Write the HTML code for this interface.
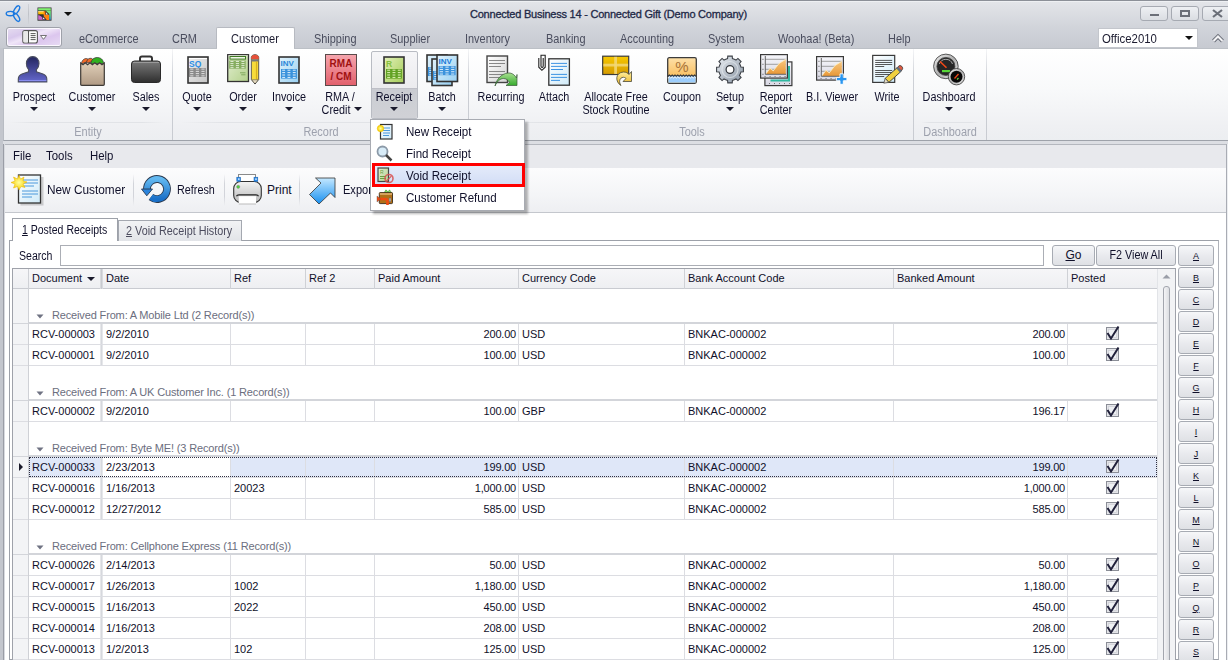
<!DOCTYPE html><html><head><meta charset="utf-8"><style>
*{margin:0;padding:0;box-sizing:border-box}
html,body{width:1228px;height:660px;overflow:hidden}
body{position:relative;background:#fff;font-family:"Liberation Sans",sans-serif;font-size:12px;color:#10102a}
.a{position:absolute}
.t{position:absolute;white-space:nowrap;line-height:14px}
svg{position:absolute;overflow:visible}
.dd{position:absolute;width:0;height:0;border-left:4px solid transparent;border-right:4px solid transparent;border-top:4px solid #1a1a2c}
</style></head><body>
<div class="a" style="left:0px;top:0px;width:1228px;height:48px;background:linear-gradient(#e4e6ea,#dcdee3 12px,#d2d5db 26px,#cbced5 40px,#c7cad1 48px)"></div>
<div class="a" style="left:0px;top:0px;width:1228px;height:1px;background:#8c9098"></div>
<div class="a" style="left:0px;top:1px;width:1228px;height:1px;background:#eef0f3"></div>
<div class="t" style="left:470px;top:5px;font-size:11px;color:#1e2846;letter-spacing:-0.23px;-webkit-text-stroke:0.3px #1e2846;line-height:18px">Connected Business 14 - Connected Gift (Demo Company)</div>
<svg style="left:4px;top:4px" width="20" height="20" viewBox="0 0 20 20"><g fill="none" stroke="#1a78e0" stroke-width="1.4"><ellipse cx="6.3" cy="9.6" rx="4.1" ry="2.2"/><ellipse cx="12.6" cy="5.9" rx="4.6" ry="2.1" transform="rotate(-58 12.6 5.9)"/><ellipse cx="12.6" cy="13.3" rx="4.6" ry="2.1" transform="rotate(58 12.6 13.3)"/></g></svg>
<div class="a" style="left:28px;top:4px;width:1px;height:20px;background:linear-gradient(#d0d3d8,#bfc2c8,#d0d3d8)"></div>
<svg style="left:37px;top:7px" width="15" height="14" viewBox="0 0 15 14"><defs><linearGradient id="gQa" x1="0" y1="0" x2="0" y2="1"><stop offset="0" stop-color="#80f070"/><stop offset="0.6" stop-color="#60d8a0"/><stop offset="1" stop-color="#30a0f0"/></linearGradient></defs><rect x="0.5" y="0.5" width="14" height="13.2" fill="#333"/><rect x="1.2" y="1.2" width="12.6" height="2.2" fill="#80f070"/><path d="M8.6,3.4 L13.8,3.4 L13.8,12.8 L12.3,12.8 L12.3,7 Z" fill="url(#gQa)"/><rect x="1.2" y="4.2" width="5.8" height="3.3" fill="#ffb800"/><rect x="1.2" y="4.2" width="5.8" height="1" fill="#ffe090"/><rect x="1.2" y="8.2" width="7" height="4.6" fill="#c868c8"/><path d="M1.2,7.5 L6,7.5 L11.6,13 L9.4,13 Z" fill="#333"/><path d="M6.5,4.2 L8.2,4.2 L12,8 L12,13 L9.8,13 L6.8,9.6 L6.8,7.5 Z" fill="#ff8010"/><path d="M8.4,4.5 L11.8,7.8 L8.4,7.8 Z" fill="#333"/><path d="M9,5.6 L11,7.4 L9,7.4 Z" fill="#e0f8ff"/><path d="M5.4,9.2 L8.8,12.4 L5.4,12.4 Z" fill="#333"/><path d="M6,10.2 L7.8,11.9 L6,11.9 Z" fill="#e0f8ff"/></svg>
<div class="dd" style="left:64px;top:12px;border-top-color:#111"></div>
<div class="a" style="left:1140px;top:6px;width:28px;height:15px;border:1px solid #a6aab2;border-radius:3px;background:linear-gradient(#eef0f3,#dadde2)"></div>
<div class="a" style="left:1171px;top:6px;width:28px;height:15px;border:1px solid #a6aab2;border-radius:3px;background:linear-gradient(#eef0f3,#dadde2)"></div>
<div class="a" style="left:1202px;top:6px;width:30px;height:15px;border:1px solid #a6aab2;border-radius:3px;background:linear-gradient(#eef0f3,#dadde2)"></div>
<div class="a" style="left:1150px;top:14px;width:9px;height:2px;background:#6b6f78"></div>
<div class="a" style="left:1180px;top:10px;width:10px;height:7px;border:2px solid #6b6f78"></div>
<svg style="left:1212px;top:9px" width="11" height="9" viewBox="0 0 11 9"><path d="M1,1 L10,8 M10,1 L1,8" stroke="#6b6f78" stroke-width="2.2"/></svg>
<div class="t" style="left:79px;top:32px;transform:scaleX(0.91);transform-origin:0 0;font-size:12px;color:#4a4d5e">eCommerce</div>
<div class="t" style="left:172px;top:32px;transform:scaleX(0.91);transform-origin:0 0;font-size:12px;color:#4a4d5e">CRM</div>
<div class="t" style="left:390px;top:32px;transform:scaleX(0.91);transform-origin:0 0;font-size:12px;color:#4a4d5e">Supplier</div>
<div class="t" style="left:465px;top:32px;transform:scaleX(0.91);transform-origin:0 0;font-size:12px;color:#4a4d5e">Inventory</div>
<div class="t" style="left:546px;top:32px;transform:scaleX(0.91);transform-origin:0 0;font-size:12px;color:#4a4d5e">Banking</div>
<div class="t" style="left:620px;top:32px;transform:scaleX(0.91);transform-origin:0 0;font-size:12px;color:#4a4d5e">Accounting</div>
<div class="t" style="left:708px;top:32px;transform:scaleX(0.91);transform-origin:0 0;font-size:12px;color:#4a4d5e">System</div>
<div class="t" style="left:778px;top:32px;transform:scaleX(0.91);transform-origin:0 0;font-size:12px;color:#4a4d5e">Woohaa! (Beta)</div>
<div class="t" style="left:888px;top:32px;transform:scaleX(0.91);transform-origin:0 0;font-size:12px;color:#4a4d5e">Help</div>
<div class="t" style="left:314px;top:32px;transform:scaleX(0.91);transform-origin:0 0;font-size:12px;color:#4a4d5e">Shipping</div>
<div class="a" style="left:6px;top:27px;width:56px;height:20px;border:1px solid #9ea1a9;border-radius:3px;box-shadow:inset 0 0 0 1px #fbf8fe;background:linear-gradient(160deg,#e6def0,#d8c8ec 30%,#f0e6f8 45%,#dcc6ee 65%,#e8dcf4)"></div>
<svg style="left:22px;top:30px" width="27" height="14" viewBox="0 0 27 14"><rect x="0.8" y="0.6" width="14.6" height="12.4" rx="2" fill="#fff" stroke="#555" stroke-width="1.1"/><rect x="1.5" y="1.3" width="4" height="11" fill="#e8e8e8"/><line x1="6.5" y1="1" x2="6.5" y2="13" stroke="#555" stroke-width="1.1"/><path d="M8.6,3.6h5M8.6,5.6h5M8.6,7.6h5M8.6,9.6h5" stroke="#444" stroke-width="0.9"/><path d="M18.5,5.5 L24.5,5.5 L21.5,9.3 Z" fill="#fff" stroke="#666" stroke-width="0.9"/></svg>
<div class="a" style="left:216px;top:27px;width:79px;height:22px;background:#fff;border:1px solid #b7bac1;border-bottom:none;border-radius:2px 2px 0 0"></div>
<div class="t" style="left:231px;top:32px;transform:scaleX(0.92);transform-origin:0 0;font-size:12px;color:#1c1c30">Customer</div>
<div class="a" style="left:1098px;top:28px;width:100px;height:20px;background:#fff;border:1px solid #c3c6cc"></div>
<div class="t" style="left:1102px;top:32px;transform:scaleX(0.95);transform-origin:0 0;font-size:12px;color:#1c1c30">Office2010</div>
<div class="dd" style="left:1185px;top:36px;border-top-color:#111"></div>
<svg style="left:1212px;top:34px" width="12" height="9" viewBox="0 0 12 9"><path d="M1.5,7 L6,2.5 L10.5,7" fill="none" stroke="#6c707a" stroke-width="4"/><path d="M1.5,7 L6,2.5 L10.5,7" fill="none" stroke="#f4f4f6" stroke-width="2"/></svg>
<div class="a" style="left:3px;top:48px;width:1225px;height:93px;background:linear-gradient(#ffffff,#f8f9fa 45%,#eff0f3 85%,#eceef1);border-top:1px solid #bcc0c6;border-left:1px solid #b8bcc3;border-bottom:1px solid #9ea2aa"></div>
<div class="a" style="left:217px;top:48px;width:77px;height:1px;background:#fff"></div>
<div class="a" style="left:172px;top:49px;width:1px;height:91px;background:linear-gradient(#f4f5f7,#cdd0d6 30%,#c8cbd1)"></div>
<div class="a" style="left:468px;top:49px;width:1px;height:91px;background:linear-gradient(#f4f5f7,#cdd0d6 30%,#c8cbd1)"></div>
<div class="a" style="left:913px;top:49px;width:1px;height:91px;background:linear-gradient(#f4f5f7,#cdd0d6 30%,#c8cbd1)"></div>
<div class="a" style="left:986px;top:49px;width:1px;height:91px;background:linear-gradient(#f4f5f7,#cdd0d6 30%,#c8cbd1)"></div>
<div class="a" style="left:10px;top:122px;width:155px;height:1px;background:linear-gradient(90deg,rgba(225,227,231,0),#e1e3e7 15%,#e1e3e7 85%,rgba(225,227,231,0))"></div>
<div class="a" style="left:180px;top:122px;width:280px;height:1px;background:linear-gradient(90deg,rgba(225,227,231,0),#e1e3e7 15%,#e1e3e7 85%,rgba(225,227,231,0))"></div>
<div class="a" style="left:476px;top:122px;width:430px;height:1px;background:linear-gradient(90deg,rgba(225,227,231,0),#e1e3e7 15%,#e1e3e7 85%,rgba(225,227,231,0))"></div>
<div class="a" style="left:921px;top:122px;width:58px;height:1px;background:linear-gradient(90deg,rgba(225,227,231,0),#e1e3e7 15%,#e1e3e7 85%,rgba(225,227,231,0))"></div>
<div class="t" style="left:-12px;top:125px;width:200px;text-align:center;transform:scaleX(0.91);transform-origin:50% 0;font-size:12px;color:#9da1ad">Entity</div>
<div class="t" style="left:221px;top:125px;width:200px;text-align:center;transform:scaleX(0.91);transform-origin:50% 0;font-size:12px;color:#9da1ad">Record</div>
<div class="t" style="left:592px;top:125px;width:200px;text-align:center;transform:scaleX(0.91);transform-origin:50% 0;font-size:12px;color:#9da1ad">Tools</div>
<div class="t" style="left:850px;top:125px;width:200px;text-align:center;transform:scaleX(0.91);transform-origin:50% 0;font-size:12px;color:#9da1ad">Dashboard</div>
<div class="a" style="left:371px;top:51px;width:47px;height:68px;border:1px solid #b9bcc3;border-radius:2px;background:linear-gradient(#f6f6f8,#ececef 50%,#e6e7ea)"></div>
<div class="a" style="left:372px;top:88px;width:45px;height:30px;border-radius:0 0 2px 2px;background:linear-gradient(#b9bac2,#c9cbd1 1.5px,#cdcfd4 40%,#d0d1d6)"></div>
<div class="t" style="left:-66.5px;top:90px;width:200px;text-align:center;transform:scaleX(0.9);transform-origin:50% 0;font-size:12px">Prospect</div>
<div class="dd" style="left:29.5px;top:107px;border-top-color:#1a1a2c"></div>
<div class="t" style="left:-8.5px;top:90px;width:200px;text-align:center;transform:scaleX(0.9);transform-origin:50% 0;font-size:12px">Customer</div>
<div class="dd" style="left:87.5px;top:107px;border-top-color:#1a1a2c"></div>
<div class="t" style="left:45.5px;top:90px;width:200px;text-align:center;transform:scaleX(0.9);transform-origin:50% 0;font-size:12px">Sales</div>
<div class="dd" style="left:141.5px;top:107px;border-top-color:#1a1a2c"></div>
<div class="t" style="left:97px;top:90px;width:200px;text-align:center;transform:scaleX(0.9);transform-origin:50% 0;font-size:12px">Quote</div>
<div class="dd" style="left:193px;top:107px;border-top-color:#1a1a2c"></div>
<div class="t" style="left:142.5px;top:90px;width:200px;text-align:center;transform:scaleX(0.9);transform-origin:50% 0;font-size:12px">Order</div>
<div class="dd" style="left:238.5px;top:107px;border-top-color:#1a1a2c"></div>
<div class="t" style="left:189px;top:90px;width:200px;text-align:center;transform:scaleX(0.9);transform-origin:50% 0;font-size:12px">Invoice</div>
<div class="dd" style="left:285px;top:107px;border-top-color:#1a1a2c"></div>
<div class="t" style="left:294px;top:90px;width:200px;text-align:center;transform:scaleX(0.9);transform-origin:50% 0;font-size:12px">Receipt</div>
<div class="dd" style="left:390px;top:107px;border-top-color:#1a1a2c"></div>
<div class="t" style="left:342px;top:90px;width:200px;text-align:center;transform:scaleX(0.9);transform-origin:50% 0;font-size:12px">Batch</div>
<div class="dd" style="left:438px;top:107px;border-top-color:#1a1a2c"></div>
<div class="t" style="left:401px;top:90px;width:200px;text-align:center;transform:scaleX(0.9);transform-origin:50% 0;font-size:12px">Recurring</div>
<div class="t" style="left:454px;top:90px;width:200px;text-align:center;transform:scaleX(0.9);transform-origin:50% 0;font-size:12px">Attach</div>
<div class="t" style="left:582px;top:90px;width:200px;text-align:center;transform:scaleX(0.9);transform-origin:50% 0;font-size:12px">Coupon</div>
<div class="t" style="left:630px;top:90px;width:200px;text-align:center;transform:scaleX(0.9);transform-origin:50% 0;font-size:12px">Setup</div>
<div class="dd" style="left:726px;top:107px;border-top-color:#1a1a2c"></div>
<div class="t" style="left:732px;top:90px;width:200px;text-align:center;transform:scaleX(0.9);transform-origin:50% 0;font-size:12px">B.I. Viewer</div>
<div class="t" style="left:787px;top:90px;width:200px;text-align:center;transform:scaleX(0.9);transform-origin:50% 0;font-size:12px">Write</div>
<div class="t" style="left:849px;top:90px;width:200px;text-align:center;transform:scaleX(0.9);transform-origin:50% 0;font-size:12px">Dashboard</div>
<div class="dd" style="left:945px;top:107px;border-top-color:#1a1a2c"></div>
<div class="t" style="left:240px;top:90px;width:200px;text-align:center;transform:scaleX(0.9);transform-origin:50% 0;font-size:12px">RMA /</div>
<div class="t" style="left:236px;top:103px;width:200px;text-align:center;transform:scaleX(0.9);transform-origin:50% 0;font-size:12px">Credit</div>
<div class="dd" style="left:354px;top:107px;border-top-color:#1a1a2c"></div>
<div class="t" style="left:516px;top:90px;width:200px;text-align:center;transform:scaleX(0.9);transform-origin:50% 0;font-size:12px">Allocate Free</div>
<div class="t" style="left:516px;top:103px;width:200px;text-align:center;transform:scaleX(0.9);transform-origin:50% 0;font-size:12px">Stock Routine</div>
<div class="t" style="left:676px;top:90px;width:200px;text-align:center;transform:scaleX(0.9);transform-origin:50% 0;font-size:12px">Report</div>
<div class="t" style="left:676px;top:103px;width:200px;text-align:center;transform:scaleX(0.9);transform-origin:50% 0;font-size:12px">Center</div>
<svg width="0" height="0" style="position:absolute"><defs>
<linearGradient id="gPerson" x1="0" y1="0" x2="0" y2="1"><stop offset="0" stop-color="#23265e"/><stop offset="1" stop-color="#6468cc"/></linearGradient>
<linearGradient id="gBag" x1="0" y1="0" x2="0" y2="1"><stop offset="0" stop-color="#e0cfb8"/><stop offset="1" stop-color="#b09a84"/></linearGradient>
<linearGradient id="gCase" x1="0" y1="0" x2="0" y2="1"><stop offset="0" stop-color="#7a7a7a"/><stop offset="1" stop-color="#2e2e2e"/></linearGradient>
<linearGradient id="gGray" x1="0" y1="0" x2="1" y2="1"><stop offset="0" stop-color="#f0f0f0"/><stop offset="1" stop-color="#c4c4c4"/></linearGradient>
<linearGradient id="gGreen" x1="0" y1="0" x2="1" y2="1"><stop offset="0" stop-color="#e4efd2"/><stop offset="1" stop-color="#b2d08a"/></linearGradient>
<linearGradient id="gLime" x1="0" y1="0" x2="1" y2="1"><stop offset="0" stop-color="#e2f0b8"/><stop offset="1" stop-color="#a4cc58"/></linearGradient>
<linearGradient id="gBlue" x1="0" y1="0" x2="1" y2="1"><stop offset="0" stop-color="#e2f3fc"/><stop offset="1" stop-color="#98d0f2"/></linearGradient>
<linearGradient id="gRed" x1="0" y1="0" x2="0" y2="1"><stop offset="0" stop-color="#f6a6ae"/><stop offset="1" stop-color="#e2606c"/></linearGradient>
<linearGradient id="gGold" x1="0" y1="0" x2="0" y2="1"><stop offset="0" stop-color="#f7c800"/><stop offset="1" stop-color="#d49a00"/></linearGradient>
<linearGradient id="gOrange" x1="0" y1="0" x2="0" y2="1"><stop offset="0" stop-color="#fde0a8"/><stop offset="1" stop-color="#f8b448"/></linearGradient>
<linearGradient id="gGear" x1="0" y1="0" x2="1" y2="1"><stop offset="0" stop-color="#eef2f6"/><stop offset="0.5" stop-color="#b8c0ca"/><stop offset="1" stop-color="#8a96a4"/></linearGradient>
<linearGradient id="gChart" x1="0" y1="0" x2="0" y2="1"><stop offset="0" stop-color="#f6f6fa"/><stop offset="1" stop-color="#d8d8e4"/></linearGradient>
<linearGradient id="gArea" x1="0" y1="0" x2="0" y2="1"><stop offset="0" stop-color="#f8c880"/><stop offset="1" stop-color="#e89838"/></linearGradient>
<linearGradient id="gArrowG" x1="0" y1="0" x2="0" y2="1"><stop offset="0" stop-color="#a8e090"/><stop offset="1" stop-color="#30a828"/></linearGradient>
<linearGradient id="gBlueArr" x1="0" y1="0" x2="0" y2="1"><stop offset="0" stop-color="#c4e8ff"/><stop offset="1" stop-color="#1890f0"/></linearGradient>
<linearGradient id="gRefresh" x1="0" y1="0" x2="0" y2="1"><stop offset="0" stop-color="#62b8f0"/><stop offset="1" stop-color="#1a70c8"/></linearGradient>
<linearGradient id="gPrinter" x1="0" y1="0" x2="0" y2="1"><stop offset="0" stop-color="#f4f4f4"/><stop offset="1" stop-color="#b8b8b8"/></linearGradient>
<linearGradient id="gPaper" x1="0" y1="0" x2="1" y2="1"><stop offset="0" stop-color="#ffffff"/><stop offset="1" stop-color="#d4d4d4"/></linearGradient>
<linearGradient id="gPaperB" x1="0" y1="0" x2="1" y2="1"><stop offset="0" stop-color="#ffffff"/><stop offset="1" stop-color="#cfeaf8"/></linearGradient>
<linearGradient id="gRing" x1="0" y1="0" x2="1" y2="1"><stop offset="0" stop-color="#f0f0f0"/><stop offset="0.5" stop-color="#b0b0b0"/><stop offset="1" stop-color="#e8e8e8"/></linearGradient>
<linearGradient id="gArrowY" x1="0" y1="0" x2="0" y2="1"><stop offset="0" stop-color="#fff0a0"/><stop offset="1" stop-color="#e8b020"/></linearGradient>
<radialGradient id="gSun" cx="0.5" cy="0.5" r="0.5"><stop offset="0" stop-color="#ffffa0"/><stop offset="1" stop-color="#f8d000"/></radialGradient>
</defs></svg>
<svg style="left:18px;top:56px" width="30" height="27" viewBox="0 0 30 27"><path d="M14.7,0.6 C18.5,0.6 21,3.5 21,7.5 C21,10.5 19.8,12.3 18.4,13.5 L18.4,15.8 L25,18 C27.5,19 28.8,20.5 28.8,23 L28.8,25.9 L0.3,25.9 L0.3,23 C0.3,20.5 1.5,19 4,18 L10.6,15.8 L10.6,13.5 C9.2,12.3 8.4,10.5 8.4,7.5 C8.4,3.5 11,0.6 14.7,0.6 Z" fill="url(#gPerson)" stroke="#4a4e60" stroke-width="1.1"/><rect x="1" y="24" width="27.3" height="1.1" fill="#8a8ef0"/></svg>
<svg style="left:80px;top:55px" width="25" height="31" viewBox="0 0 25 31"><path d="M1.5,9 C1.5,3.5 8,1.5 9,6 Z" fill="#f06a28" stroke="#333" stroke-width="0.7"/><path d="M6.5,8 C6.5,2.5 13,1.5 14,6.5 Z" fill="#ee6a2a" stroke="#333" stroke-width="0.7"/><path d="M11,8.5 C11,0.5 23.5,0.5 23.5,8.5 Z" fill="#30b020" stroke="#333" stroke-width="0.7"/><path d="M0.7,8 L3,9.8 L5.2,7.8 L7.6,9.8 L10,7.8 L12.4,9.8 L14.8,7.8 L17.2,9.8 L19.6,7.8 L22,9.8 L24.3,8 L24.3,29.3 Q24.3,30.3 23.3,30.3 L1.7,30.3 Q0.7,30.3 0.7,29.3 Z" fill="url(#gBag)" stroke="#3e3a36" stroke-width="1.2"/></svg>
<svg style="left:131px;top:56px" width="30" height="27" viewBox="0 0 30 27"><rect x="9" y="0.5" width="12" height="6" rx="2" fill="none" stroke="#333" stroke-width="2"/><rect x="0.5" y="5" width="29" height="21.5" rx="3" fill="url(#gCase)" stroke="#2a2a2a"/><rect x="2" y="6" width="26" height="1" fill="#9a9a9a"/></svg>
<svg style="left:187px;top:56px" width="22" height="28" viewBox="0 0 22 28"><rect x="1" y="1" width="20" height="26" fill="url(#gGray)" stroke="#333" stroke-width="1.6"/><rect x="2" y="2" width="18" height="1" fill="#fff"/><text x="2" y="10.5" font-family="Liberation Sans" font-weight="bold" font-size="8.5" fill="#2a8ee6">SQ</text><rect x="2" y="12" width="16.799999999999997" height="9.0" fill="#8a8a8a"/><line x1="3.2" y1="13.12" x2="6.3999999999999995" y2="13.12" stroke="#e4e4e4" stroke-width="0.94"/><line x1="8.799999999999999" y1="13.12" x2="12.0" y2="13.12" stroke="#e4e4e4" stroke-width="0.94"/><line x1="14.399999999999999" y1="13.12" x2="17.599999999999998" y2="13.12" stroke="#e4e4e4" stroke-width="0.94"/><line x1="3.2" y1="15.38" x2="6.3999999999999995" y2="15.38" stroke="#e4e4e4" stroke-width="0.94"/><line x1="8.799999999999999" y1="15.38" x2="12.0" y2="15.38" stroke="#e4e4e4" stroke-width="0.94"/><line x1="14.399999999999999" y1="15.38" x2="17.599999999999998" y2="15.38" stroke="#e4e4e4" stroke-width="0.94"/><line x1="3.2" y1="17.62" x2="6.3999999999999995" y2="17.62" stroke="#e4e4e4" stroke-width="0.94"/><line x1="8.799999999999999" y1="17.62" x2="12.0" y2="17.62" stroke="#e4e4e4" stroke-width="0.94"/><line x1="14.399999999999999" y1="17.62" x2="17.599999999999998" y2="17.62" stroke="#e4e4e4" stroke-width="0.94"/><line x1="3.2" y1="19.88" x2="6.3999999999999995" y2="19.88" stroke="#e4e4e4" stroke-width="0.94"/><line x1="8.799999999999999" y1="19.88" x2="12.0" y2="19.88" stroke="#e4e4e4" stroke-width="0.94"/><line x1="14.399999999999999" y1="19.88" x2="17.599999999999998" y2="19.88" stroke="#e4e4e4" stroke-width="0.94"/></svg>
<svg style="left:227px;top:54px" width="33" height="31" viewBox="0 0 33 31"><rect x="0.7" y="0.7" width="20.8" height="26.8" fill="url(#gGreen)" stroke="#333" stroke-width="1.3"/><rect x="1.4" y="1.4" width="19.4" height="0.8" fill="#fff" opacity="0.8"/><rect x="3" y="2.5" width="15.5" height="2.6" fill="#f0f6e8" stroke="#3e7a22" stroke-width="1"/><rect x="2.2" y="6.5" width="16.5" height="8.2" fill="#86ad60"/><line x1="3.4000000000000004" y1="7.53" x2="6.5" y2="7.53" stroke="#eef5e4" stroke-width="0.86"/><line x1="8.9" y1="7.53" x2="12.0" y2="7.53" stroke="#eef5e4" stroke-width="0.86"/><line x1="14.399999999999999" y1="7.53" x2="17.5" y2="7.53" stroke="#eef5e4" stroke-width="0.86"/><line x1="3.4000000000000004" y1="9.58" x2="6.5" y2="9.58" stroke="#eef5e4" stroke-width="0.86"/><line x1="8.9" y1="9.58" x2="12.0" y2="9.58" stroke="#eef5e4" stroke-width="0.86"/><line x1="14.399999999999999" y1="9.58" x2="17.5" y2="9.58" stroke="#eef5e4" stroke-width="0.86"/><line x1="3.4000000000000004" y1="11.62" x2="6.5" y2="11.62" stroke="#eef5e4" stroke-width="0.86"/><line x1="8.9" y1="11.62" x2="12.0" y2="11.62" stroke="#eef5e4" stroke-width="0.86"/><line x1="14.399999999999999" y1="11.62" x2="17.5" y2="11.62" stroke="#eef5e4" stroke-width="0.86"/><line x1="3.4000000000000004" y1="13.67" x2="6.5" y2="13.67" stroke="#eef5e4" stroke-width="0.86"/><line x1="8.9" y1="13.67" x2="12.0" y2="13.67" stroke="#eef5e4" stroke-width="0.86"/><line x1="14.399999999999999" y1="13.67" x2="17.5" y2="13.67" stroke="#eef5e4" stroke-width="0.86"/><path d="M13,18.8h5.5M14.2,20.8h4.3" stroke="#7aa456" stroke-width="0.9"/><path d="M24.3,3.5 C24.3,-0.3 31.7,-0.3 31.7,3.5 L31.7,25.5 L28,30 L24.3,25.5 Z" fill="#f6dc3a" stroke="#4a4a4a" stroke-width="0.9"/><path d="M24.3,3.5 C24.3,-0.3 31.7,-0.3 31.7,3.5 L31.7,5.2 L24.3,5.2 Z" fill="#e6503a"/><rect x="24.3" y="5.2" width="7.4" height="2.3" fill="#777"/><path d="M29.5,7.5 L29.5,25 L31.2,25.5" stroke="#d8b020" stroke-width="1.2" fill="none"/><path d="M24.8,25.8 L31.2,25.8 L28,30 Z" fill="#e8dcc0" stroke="#555" stroke-width="0.6"/><path d="M27.2,29 L28,30.2 L28.8,29 Z" fill="#222"/></svg>
<svg style="left:278px;top:56px" width="22" height="28" viewBox="0 0 22 28"><rect x="1" y="1" width="20" height="26" fill="url(#gBlue)" stroke="#333" stroke-width="1.6"/><text x="2.5" y="9.5" font-family="Liberation Sans" font-weight="bold" font-size="8" fill="#2a86d8">INV</text><rect x="3" y="13" width="15.899999999999999" height="9.6" fill="#3a92dc"/><line x1="4.2" y1="14.20" x2="7.1000000000000005" y2="14.20" stroke="#dff0fb" stroke-width="1.01"/><line x1="9.5" y1="14.20" x2="12.4" y2="14.20" stroke="#dff0fb" stroke-width="1.01"/><line x1="14.799999999999999" y1="14.20" x2="17.7" y2="14.20" stroke="#dff0fb" stroke-width="1.01"/><line x1="4.2" y1="16.60" x2="7.1000000000000005" y2="16.60" stroke="#dff0fb" stroke-width="1.01"/><line x1="9.5" y1="16.60" x2="12.4" y2="16.60" stroke="#dff0fb" stroke-width="1.01"/><line x1="14.799999999999999" y1="16.60" x2="17.7" y2="16.60" stroke="#dff0fb" stroke-width="1.01"/><line x1="4.2" y1="19.00" x2="7.1000000000000005" y2="19.00" stroke="#dff0fb" stroke-width="1.01"/><line x1="9.5" y1="19.00" x2="12.4" y2="19.00" stroke="#dff0fb" stroke-width="1.01"/><line x1="14.799999999999999" y1="19.00" x2="17.7" y2="19.00" stroke="#dff0fb" stroke-width="1.01"/><line x1="4.2" y1="21.40" x2="7.1000000000000005" y2="21.40" stroke="#dff0fb" stroke-width="1.01"/><line x1="9.5" y1="21.40" x2="12.4" y2="21.40" stroke="#dff0fb" stroke-width="1.01"/><line x1="14.799999999999999" y1="21.40" x2="17.7" y2="21.40" stroke="#dff0fb" stroke-width="1.01"/></svg>
<svg style="left:325px;top:54px" width="32" height="32" viewBox="0 0 32 32"><rect x="0.5" y="0.5" width="31" height="31" fill="url(#gRed)" stroke="#5a4a4a"/><text x="16" y="13" text-anchor="middle" font-family="Liberation Sans" font-weight="bold" font-size="10" fill="#a01010">RMA</text><text x="16" y="26" text-anchor="middle" font-family="Liberation Sans" font-weight="bold" font-size="10" fill="#a01010">/ CM</text></svg>
<svg style="left:383px;top:56px" width="22" height="28" viewBox="0 0 22 28"><rect x="1" y="1" width="20" height="26" fill="url(#gLime)" stroke="#333" stroke-width="1.6"/><text x="3" y="10.5" font-family="Liberation Sans" font-weight="bold" font-size="8.5" fill="#86c040">R</text><rect x="3" y="13" width="15.899999999999999" height="9.6" fill="#62a224"/><line x1="4.2" y1="14.20" x2="7.1000000000000005" y2="14.20" stroke="#e0f0b8" stroke-width="1.01"/><line x1="9.5" y1="14.20" x2="12.4" y2="14.20" stroke="#e0f0b8" stroke-width="1.01"/><line x1="14.799999999999999" y1="14.20" x2="17.7" y2="14.20" stroke="#e0f0b8" stroke-width="1.01"/><line x1="4.2" y1="16.60" x2="7.1000000000000005" y2="16.60" stroke="#e0f0b8" stroke-width="1.01"/><line x1="9.5" y1="16.60" x2="12.4" y2="16.60" stroke="#e0f0b8" stroke-width="1.01"/><line x1="14.799999999999999" y1="16.60" x2="17.7" y2="16.60" stroke="#e0f0b8" stroke-width="1.01"/><line x1="4.2" y1="19.00" x2="7.1000000000000005" y2="19.00" stroke="#e0f0b8" stroke-width="1.01"/><line x1="9.5" y1="19.00" x2="12.4" y2="19.00" stroke="#e0f0b8" stroke-width="1.01"/><line x1="14.799999999999999" y1="19.00" x2="17.7" y2="19.00" stroke="#e0f0b8" stroke-width="1.01"/><line x1="4.2" y1="21.40" x2="7.1000000000000005" y2="21.40" stroke="#e0f0b8" stroke-width="1.01"/><line x1="9.5" y1="21.40" x2="12.4" y2="21.40" stroke="#e0f0b8" stroke-width="1.01"/><line x1="14.799999999999999" y1="21.40" x2="17.7" y2="21.40" stroke="#e0f0b8" stroke-width="1.01"/></svg>
<svg style="left:426px;top:54px" width="33" height="33" viewBox="0 0 33 33"><rect x="1" y="1" width="20" height="26.5" fill="url(#gBlue)" stroke="#333" stroke-width="1.6"/><rect x="2" y="13" width="5.5" height="9.0" fill="#3a92dc"/><line x1="3.2" y1="14.12" x2="6.3" y2="14.12" stroke="#dff0fb" stroke-width="0.94"/><line x1="3.2" y1="16.38" x2="6.3" y2="16.38" stroke="#dff0fb" stroke-width="0.94"/><line x1="3.2" y1="18.62" x2="6.3" y2="18.62" stroke="#dff0fb" stroke-width="0.94"/><line x1="3.2" y1="20.88" x2="6.3" y2="20.88" stroke="#dff0fb" stroke-width="0.94"/><rect x="6" y="5" width="20" height="26.5" fill="url(#gBlue)" stroke="#333" stroke-width="1.6"/><rect x="7" y="17" width="5.5" height="9.0" fill="#3a92dc"/><line x1="8.2" y1="18.12" x2="11.3" y2="18.12" stroke="#dff0fb" stroke-width="0.94"/><line x1="8.2" y1="20.38" x2="11.3" y2="20.38" stroke="#dff0fb" stroke-width="0.94"/><line x1="8.2" y1="22.62" x2="11.3" y2="22.62" stroke="#dff0fb" stroke-width="0.94"/><line x1="8.2" y1="24.88" x2="11.3" y2="24.88" stroke="#dff0fb" stroke-width="0.94"/><rect x="11" y="1" width="20.5" height="26.5" fill="url(#gBlue)" stroke="#333" stroke-width="1.6"/><text x="12.5" y="9.5" font-family="Liberation Sans" font-weight="bold" font-size="8" fill="#1a7ad8">INV</text><rect x="12.5" y="12" width="17.1" height="9.2" fill="#3a92dc"/><line x1="13.7" y1="13.15" x2="17.0" y2="13.15" stroke="#dff0fb" stroke-width="0.97"/><line x1="19.4" y1="13.15" x2="22.7" y2="13.15" stroke="#dff0fb" stroke-width="0.97"/><line x1="25.099999999999998" y1="13.15" x2="28.400000000000002" y2="13.15" stroke="#dff0fb" stroke-width="0.97"/><line x1="13.7" y1="15.45" x2="17.0" y2="15.45" stroke="#dff0fb" stroke-width="0.97"/><line x1="19.4" y1="15.45" x2="22.7" y2="15.45" stroke="#dff0fb" stroke-width="0.97"/><line x1="25.099999999999998" y1="15.45" x2="28.400000000000002" y2="15.45" stroke="#dff0fb" stroke-width="0.97"/><line x1="13.7" y1="17.75" x2="17.0" y2="17.75" stroke="#dff0fb" stroke-width="0.97"/><line x1="19.4" y1="17.75" x2="22.7" y2="17.75" stroke="#dff0fb" stroke-width="0.97"/><line x1="25.099999999999998" y1="17.75" x2="28.400000000000002" y2="17.75" stroke="#dff0fb" stroke-width="0.97"/><line x1="13.7" y1="20.05" x2="17.0" y2="20.05" stroke="#dff0fb" stroke-width="0.97"/><line x1="19.4" y1="20.05" x2="22.7" y2="20.05" stroke="#dff0fb" stroke-width="0.97"/><line x1="25.099999999999998" y1="20.05" x2="28.400000000000002" y2="20.05" stroke="#dff0fb" stroke-width="0.97"/></svg>
<svg style="left:486px;top:55px" width="32" height="32" viewBox="0 0 32 32"><rect x="1" y="1" width="20.5" height="26.5" fill="url(#gPaper)" stroke="#444" stroke-width="1.4"/><path d="M3,5.5h16M3,8.5h16M3,11.5h12M3,16.5h16M3,19.5h16M3,22.5h16" stroke="#7a7a7a" stroke-width="0.9"/><path d="M9,31 C11,22 18,17.5 24,18 C27,18.5 29,20.5 30.5,23 L31,19.5 L31,30.5 L20,30.5 L23.5,27.5 C22,25 20,23.5 17.5,23.5 C14,23.5 11,26.5 9,31 Z" fill="url(#gArrowG)" stroke="#3a5a3a" stroke-width="0.7"/></svg>
<svg style="left:538px;top:54px" width="33" height="33" viewBox="0 0 33 33"><rect x="10.8" y="4.8" width="20.6" height="26.4" fill="url(#gPaperB)" stroke="#333" stroke-width="1.3"/><path d="M13,9.4h16M13,12.4h16M13,15.5h12M13,20.4h16M13,23.4h16M13,26.4h9" stroke="#2a88e0" stroke-width="0.9"/><path d="M0.8,4 L0.8,13.2 L3.9,16.3 L7.2,13.2 L7.2,1.2 L3,1.2 L3,12 Q3,13.4 4.1,13.4 Q5.2,13.4 5.2,12 L5.2,4" fill="none" stroke="#222" stroke-width="1.1"/></svg>
<svg style="left:602px;top:55px" width="31" height="31" viewBox="0 0 31 31"><rect x="0.7" y="1.2" width="26" height="18.3" fill="url(#gGold)" stroke="#3a3a3a" stroke-width="1.2"/><rect x="12.2" y="1.8" width="2.8" height="17.2" fill="#f2d878" opacity="0.85"/><rect x="1.3" y="8.7" width="24.8" height="2.8" fill="#f2d878" opacity="0.85"/><path d="M19,30.5 C13,27 13,17.5 21.5,17 C24,17 26,18 27,19.5 L29.5,16.5 L29.5,26.5 L21,26.5 L24,23.5 C23,22.5 22,22.3 21.3,22.3 C17.5,22.5 16.5,27 19,30.5 Z" fill="url(#gArrowY)" stroke="#4a4a3a" stroke-width="0.8"/></svg>
<svg style="left:667px;top:57px" width="30" height="27" viewBox="0 0 30 27"><rect x="0.7" y="0.7" width="28.6" height="25.6" rx="1.5" fill="url(#gOrange)" stroke="#3c3c3c" stroke-width="1.3"/><rect x="1.3" y="18.5" width="27.4" height="7.2" fill="#9ccdfc"/><path d="M1.3,18 L1.0,19.3 L2.4,18.0 L3.8,19.3 L5.2,18.0 L6.6,19.3 L8.0,18.0 L9.4,19.3 L10.8,18.0 L12.2,19.3 L13.6,18.0 L15.0,19.3 L16.4,18.0 L17.8,19.3 L19.2,18.0 L20.6,19.3 L22.0,18.0 L23.4,19.3 L24.8,18.0 L26.2,19.3 L27.6,18.0 L29.0,19.3 " fill="none" stroke="#3a3a3a" stroke-width="1.2"/><path d="M1.3,20.3 L1.0,21.2 L2.4,19.9 L3.8,21.2 L5.2,19.9 L6.6,21.2 L8.0,19.9 L9.4,21.2 L10.8,19.9 L12.2,21.2 L13.6,19.9 L15.0,21.2 L16.4,19.9 L17.8,21.2 L19.2,19.9 L20.6,21.2 L22.0,19.9 L23.4,21.2 L24.8,19.9 L26.2,21.2 L27.6,19.9 L29.0,21.2 " fill="none" stroke="#f4f4f4" stroke-width="0.9"/><text x="15" y="15.3" text-anchor="middle" font-family="Liberation Sans" font-size="15" fill="#a8743a">%</text></svg>
<svg style="left:716px;top:56px" width="28" height="28" viewBox="0 0 28 28"><polygon points="9.73,3.15 11.58,2.57 11.76,0.09 16.24,0.09 16.42,2.57 18.30,3.16 20.02,4.05 21.90,2.43 25.07,5.60 23.45,7.48 24.35,9.23 24.93,11.08 27.41,11.26 27.41,15.74 24.93,15.92 24.34,17.80 23.45,19.52 25.07,21.40 21.90,24.57 20.02,22.95 18.27,23.85 16.42,24.43 16.24,26.91 11.76,26.91 11.58,24.43 9.70,23.84 7.98,22.95 6.10,24.57 2.93,21.40 4.55,19.52 3.65,17.77 3.07,15.92 0.59,15.74 0.59,11.26 3.07,11.08 3.66,9.20 4.55,7.48 2.93,5.60 6.10,2.43 7.98,4.05" fill="url(#gGear)" stroke="#3e4248" stroke-width="1.1"/><circle cx="14" cy="13.5" r="8" fill="none" stroke="#e8ecf0" stroke-width="1.2" opacity="0.6"/><circle cx="14" cy="13.5" r="3.9" fill="#fff" stroke="#2e3238" stroke-width="1.2"/></svg>
<svg style="left:760px;top:54px" width="33" height="33" viewBox="0 0 33 33"><rect x="4.9" y="7.9" width="27" height="23.7" fill="url(#gChart)" stroke="#3a3a3a" stroke-width="1.2"/><path d="M10.5,26.5 L29,26.5 L29,12" fill="none" stroke="#30b8a0" stroke-width="2"/><rect x="9" y="29" width="0.9" height="0.9" fill="#555"/><rect x="14" y="29" width="0.9" height="0.9" fill="#555"/><rect x="19" y="29" width="0.9" height="0.9" fill="#555"/><rect x="24" y="29" width="0.9" height="0.9" fill="#555"/><rect x="29" y="29" width="0.9" height="0.9" fill="#555"/><rect x="0.6" y="0.6" width="26.8" height="23.5" fill="url(#gChart)" stroke="#3a3a3a" stroke-width="1.2"/><path d="M5.3,5.3h20.5M5.3,10.3h20.5M5.3,15.3h20.5" stroke="#8a8a8a" stroke-width="0.8"/><path d="M2.3,5.3h1.3M2.3,10.3h1.3M2.3,15.3h1.3M2.3,20.3h1.3" stroke="#555" stroke-width="0.8"/><rect x="4.6" y="22" width="0.9" height="0.9" fill="#555"/><rect x="9.6" y="22" width="0.9" height="0.9" fill="#555"/><rect x="14.6" y="22" width="0.9" height="0.9" fill="#555"/><rect x="19.6" y="22" width="0.9" height="0.9" fill="#555"/><rect x="24.6" y="22" width="0.9" height="0.9" fill="#555"/><path d="M5.8,20 L10,14.3 L13.3,16.8 L19,9.5 L25.8,5.3 L25.8,20 Z" fill="url(#gArea)"/><path d="M5.8,20 L10,14.3 L13.3,16.8 L19,9.5 L25.8,5.3" fill="none" stroke="#fff4c8" stroke-width="0.8"/><path d="M5.3,2V20.3H26" fill="none" stroke="#555" stroke-width="0.9"/></svg>
<svg style="left:816px;top:56px" width="32" height="30" viewBox="0 0 32 30"><rect x="0.6" y="0.6" width="26.8" height="23.5" fill="url(#gChart)" stroke="#3a3a3a" stroke-width="1.2"/><path d="M5.3,5.3h20.5M5.3,10.3h20.5M5.3,15.3h20.5" stroke="#8a8a8a" stroke-width="0.8"/><path d="M2.3,5.3h1.3M2.3,10.3h1.3M2.3,15.3h1.3M2.3,20.3h1.3" stroke="#555" stroke-width="0.8"/><rect x="4.6" y="22" width="0.9" height="0.9" fill="#555"/><rect x="9.6" y="22" width="0.9" height="0.9" fill="#555"/><rect x="14.6" y="22" width="0.9" height="0.9" fill="#555"/><rect x="19.6" y="22" width="0.9" height="0.9" fill="#555"/><rect x="24.6" y="22" width="0.9" height="0.9" fill="#555"/><path d="M5.8,20 L10,14.3 L13.3,16.8 L19,9.5 L25.8,5.3 L25.8,20 Z" fill="url(#gArea)"/><path d="M5.8,20 L10,14.3 L13.3,16.8 L19,9.5 L25.8,5.3" fill="none" stroke="#fff4c8" stroke-width="0.8"/><path d="M5.3,2V20.3H26" fill="none" stroke="#555" stroke-width="0.9"/><path d="M24,17.8h3.3v3.6h3.6v3.3h-3.6v3.6h-3.3v-3.6h-3.6v-3.3h3.6Z" fill="#2a96f0" stroke="#fff" stroke-width="0.9"/></svg>
<svg style="left:872px;top:54px" width="34" height="31" viewBox="0 0 34 31"><rect x="0.7" y="1.4" width="22" height="27" fill="url(#gPaperB)" stroke="#3a3a3a" stroke-width="1.2"/><path d="M3.2,6.4h17M3.2,8.5h17M3.2,10.5h17M3.2,12.5h9M3.2,16.5h17M3.2,18.5h17M3.2,20.5h17M3.2,22.5h9" stroke="#444" stroke-width="0.9"/><path d="M13.2,24.3 L25.15,13.7 L28.73,17.74 L16.8,28.4 Z" fill="#f0d040" stroke="#3a3a3a" stroke-width="0.9"/><path d="M25.15,13.7 L26.9,12 C28.7,10.5 31.7,13.5 30.3,15.4 L28.73,17.74 Z" fill="#e05a40" stroke="#3a3a3a" stroke-width="0.9"/><path d="M24.4,14.4 L26.2,12.8 L29.7,16.8 L28,18.4 Z" fill="#607080"/><path d="M13.2,24.3 L11.8,29.2 L16.8,28.4 Z" fill="#e8e0c8" stroke="#3a3a3a" stroke-width="0.7"/></svg>
<svg style="left:933px;top:54px" width="34" height="34" viewBox="0 0 34 34"><circle cx="12.9" cy="12.4" r="12.3" fill="url(#gRing)" stroke="#333" stroke-width="0.8"/><circle cx="12.9" cy="12.4" r="9" fill="#262626" stroke="#444" stroke-width="0.8"/><path d="M6.3,10 A7,7 0 0 1 19.5,10" fill="none" stroke="#a8a8a8" stroke-width="1"/><path d="M7,7.5 L13.5,13.8" stroke="#f04818" stroke-width="1.6"/><rect x="9" y="16" width="8" height="2.2" fill="#58d838"/><circle cx="23.5" cy="22.7" r="8.2" fill="url(#gRing)" stroke="#333" stroke-width="0.8"/><circle cx="23.5" cy="22.7" r="6" fill="#080808"/><path d="M21.5,24.5 L25.5,20" stroke="#f04818" stroke-width="1.3"/><path d="M24,25.5 L25.5,24" stroke="#70d040" stroke-width="1.3"/></svg>
<div class="a" style="left:0px;top:48px;width:3px;height:612px;background:#c3c6cd"></div>
<div class="a" style="left:3px;top:141px;width:1225px;height:3px;background:#dcdee3"></div>
<div class="a" style="left:3px;top:144px;width:1225px;height:1px;background:#b4b7be"></div>
<div class="a" style="left:3px;top:145px;width:1225px;height:23px;background:#e8e9ed"></div>
<div class="t" style="left:13px;top:149px;transform:scaleX(0.95);transform-origin:0 0;font-size:12px">File</div>
<div class="t" style="left:46px;top:149px;transform:scaleX(0.95);transform-origin:0 0;font-size:12px">Tools</div>
<div class="t" style="left:90px;top:149px;transform:scaleX(0.95);transform-origin:0 0;font-size:12px">Help</div>
<div class="a" style="left:3px;top:168px;width:1225px;height:44px;background:linear-gradient(#fcfcfd,#f4f5f7 60%,#eeeff2)"></div>
<div class="a" style="left:3px;top:212px;width:1225px;height:1px;background:#c4c7cd"></div>
<div class="a" style="left:133px;top:174px;width:1px;height:32px;background:linear-gradient(rgba(210,212,218,0),#d2d4da 30%,#d2d4da 70%,rgba(210,212,218,0))"></div>
<div class="a" style="left:224px;top:174px;width:1px;height:32px;background:linear-gradient(rgba(210,212,218,0),#d2d4da 30%,#d2d4da 70%,rgba(210,212,218,0))"></div>
<div class="a" style="left:299px;top:174px;width:1px;height:32px;background:linear-gradient(rgba(210,212,218,0),#d2d4da 30%,#d2d4da 70%,rgba(210,212,218,0))"></div>
<div class="t" style="left:47px;top:183px;transform:scaleX(0.985);transform-origin:0 0;font-size:12px">New Customer</div>
<div class="t" style="left:177px;top:183px;transform:scaleX(0.9);transform-origin:0 0;font-size:12px">Refresh</div>
<div class="t" style="left:267px;top:183px;font-size:12px">Print</div>
<div class="t" style="left:343px;top:183px;transform:scaleX(0.92);transform-origin:0 0;font-size:12px">Export</div>
<svg style="left:11px;top:174px" width="31" height="31" viewBox="0 0 31 31"><rect x="8.5" y="2" width="23" height="28.5" fill="#555" opacity="0.25" transform="translate(1,1)"/><rect x="7.5" y="1" width="22" height="28" fill="url(#gPaperB)" stroke="#333" stroke-width="1.3"/><path d="M11,6h16M11,9h16M11,12h12M11,17h16M11,20h16M11,23h10" stroke="#3a8ed8" stroke-width="0.9"/><polygon points="8,1 9.5,5 13,3 12,7 16,8 12,10 14,13.5 10,12.5 8,16 6.5,12.5 2.5,14 4,10 0,8.5 4,7 2.5,3 6.5,5" fill="url(#gSun)" stroke="#e8b000" stroke-width="0.5"/></svg>
<svg style="left:142px;top:175px" width="30" height="29" viewBox="0 0 30 29"><path d="M8.98,21.99 A10,10 0 1 0 5.04,14.87" fill="none" stroke="#2a3a50" stroke-width="7.8"/><path d="M8.98,21.99 A10,10 0 1 0 5.04,14.87" fill="none" stroke="url(#gRefresh)" stroke-width="6"/><path d="M-0.5,14 L10.5,14 L4.8,20.8 Z" fill="#2a84dc" stroke="#2a3a50" stroke-width="0.9"/></svg>
<svg style="left:233px;top:174px" width="29" height="31" viewBox="0 0 29 31"><rect x="5.5" y="0.5" width="17" height="9" fill="#fff" stroke="#8a8a8a"/><rect x="0.7" y="7.5" width="27.6" height="21" rx="7" fill="url(#gPrinter)" stroke="#333" stroke-width="1.1"/><rect x="3.8" y="3.2" width="3.8" height="4.2" fill="#2a8ae8" stroke="#1a60b0" stroke-width="0.5"/><rect x="21" y="3.2" width="3.8" height="4.2" fill="#2a8ae8" stroke="#1a60b0" stroke-width="0.5"/><rect x="5" y="4.5" width="1.6" height="1.2" fill="#fff"/><rect x="22.2" y="4.5" width="1.6" height="1.2" fill="#fff"/><circle cx="5.2" cy="12.8" r="1.6" fill="#50d040" stroke="#777" stroke-width="0.4"/><path d="M3.5,22.3 Q4,20.8 6,20.8 L23,20.8 Q25,20.8 25.5,22.3" fill="none" stroke="#222" stroke-width="1.2"/><rect x="5.8" y="22.2" width="17.2" height="7.8" fill="#fff"/><rect x="5.8" y="29.5" width="17.2" height="1" fill="#bbb"/></svg>
<svg style="left:308px;top:177px" width="29" height="28" viewBox="0 0 29 28"><path d="M7.5,1 L27,1 L27,20.5 L22.5,16 L11,27 L1.5,17.5 L13,6 Z" fill="url(#gBlueArr)" stroke="#333" stroke-width="0.8"/></svg>
<div class="a" style="left:3px;top:213px;width:1225px;height:447px;background:#fff"></div>
<div class="a" style="left:9px;top:240px;width:1210px;height:420px;border:1px solid #9da1a9;border-right:1px solid #b0b3ba;background:#fff"></div>
<div class="a" style="left:118px;top:220px;width:124px;height:21px;border:1px solid #a4a8b0;border-bottom:none;background:linear-gradient(#f2f3f5,#e2e4e8)"></div>
<div class="t" style="left:126px;top:224px;transform:scaleX(0.9);transform-origin:0 0;font-size:12px;color:#4c4c5e"><u>2</u> Void Receipt History</div>
<div class="a" style="left:12px;top:218px;width:106px;height:23px;border:1px solid #9da1a9;border-bottom:none;background:#fff"></div>
<div class="a" style="left:13px;top:240px;width:104px;height:1px;background:#fff"></div>
<div class="t" style="left:22px;top:223px;transform:scaleX(0.875);transform-origin:0 0;font-size:12px"><u>1</u> Posted Receipts</div>
<div class="t" style="left:19px;top:249px;transform:scaleX(0.88);transform-origin:0 0;font-size:12px">Search</div>
<div class="a" style="left:60px;top:245px;width:984px;height:21px;border:1px solid #abaeb5;background:#fff"></div>
<div class="a" style="left:1052px;top:245px;width:43px;height:21px;border:1px solid #a7abb3;border-radius:3px;background:linear-gradient(#f6f7f9,#e9eaee 50%,#dfe1e5)"></div>
<div class="t" style="left:973.5px;top:248px;width:200px;text-align:center;font-size:12px;"><u>G</u>o</div>
<div class="a" style="left:1096px;top:245px;width:80px;height:21px;border:1px solid #a7abb3;border-radius:3px;background:linear-gradient(#f6f7f9,#e9eaee 50%,#dfe1e5)"></div>
<div class="t" style="left:1036.0px;top:248px;width:200px;text-align:center;transform:scaleX(0.9);transform-origin:50% 0;font-size:12px;">F2 View All</div>
<div class="a" style="left:1178px;top:245px;width:36px;height:21px;border:1px solid #a7abb3;border-radius:3px;background:linear-gradient(#f6f7f9,#e9eaee 50%,#dfe1e5)"></div>
<div class="t" style="left:1096px;top:249px;width:200px;text-align:center;font-size:9px;color:#10102a"><u>A</u></div>
<div class="a" style="left:1178px;top:267px;width:36px;height:21px;border:1px solid #a7abb3;border-radius:3px;background:linear-gradient(#f6f7f9,#e9eaee 50%,#dfe1e5)"></div>
<div class="t" style="left:1096px;top:271px;width:200px;text-align:center;font-size:9px;color:#10102a"><u>B</u></div>
<div class="a" style="left:1178px;top:289px;width:36px;height:21px;border:1px solid #a7abb3;border-radius:3px;background:linear-gradient(#f6f7f9,#e9eaee 50%,#dfe1e5)"></div>
<div class="t" style="left:1096px;top:293px;width:200px;text-align:center;font-size:9px;color:#10102a"><u>C</u></div>
<div class="a" style="left:1178px;top:311px;width:36px;height:21px;border:1px solid #a7abb3;border-radius:3px;background:linear-gradient(#f6f7f9,#e9eaee 50%,#dfe1e5)"></div>
<div class="t" style="left:1096px;top:315px;width:200px;text-align:center;font-size:9px;color:#10102a"><u>D</u></div>
<div class="a" style="left:1178px;top:333px;width:36px;height:21px;border:1px solid #a7abb3;border-radius:3px;background:linear-gradient(#f6f7f9,#e9eaee 50%,#dfe1e5)"></div>
<div class="t" style="left:1096px;top:337px;width:200px;text-align:center;font-size:9px;color:#10102a"><u>E</u></div>
<div class="a" style="left:1178px;top:355px;width:36px;height:21px;border:1px solid #a7abb3;border-radius:3px;background:linear-gradient(#f6f7f9,#e9eaee 50%,#dfe1e5)"></div>
<div class="t" style="left:1096px;top:359px;width:200px;text-align:center;font-size:9px;color:#10102a"><u>F</u></div>
<div class="a" style="left:1178px;top:377px;width:36px;height:21px;border:1px solid #a7abb3;border-radius:3px;background:linear-gradient(#f6f7f9,#e9eaee 50%,#dfe1e5)"></div>
<div class="t" style="left:1096px;top:381px;width:200px;text-align:center;font-size:9px;color:#10102a"><u>G</u></div>
<div class="a" style="left:1178px;top:399px;width:36px;height:21px;border:1px solid #a7abb3;border-radius:3px;background:linear-gradient(#f6f7f9,#e9eaee 50%,#dfe1e5)"></div>
<div class="t" style="left:1096px;top:403px;width:200px;text-align:center;font-size:9px;color:#10102a"><u>H</u></div>
<div class="a" style="left:1178px;top:421px;width:36px;height:21px;border:1px solid #a7abb3;border-radius:3px;background:linear-gradient(#f6f7f9,#e9eaee 50%,#dfe1e5)"></div>
<div class="t" style="left:1096px;top:425px;width:200px;text-align:center;font-size:9px;color:#10102a"><u>I</u></div>
<div class="a" style="left:1178px;top:443px;width:36px;height:21px;border:1px solid #a7abb3;border-radius:3px;background:linear-gradient(#f6f7f9,#e9eaee 50%,#dfe1e5)"></div>
<div class="t" style="left:1096px;top:447px;width:200px;text-align:center;font-size:9px;color:#10102a"><u>J</u></div>
<div class="a" style="left:1178px;top:465px;width:36px;height:21px;border:1px solid #a7abb3;border-radius:3px;background:linear-gradient(#f6f7f9,#e9eaee 50%,#dfe1e5)"></div>
<div class="t" style="left:1096px;top:469px;width:200px;text-align:center;font-size:9px;color:#10102a"><u>K</u></div>
<div class="a" style="left:1178px;top:487px;width:36px;height:21px;border:1px solid #a7abb3;border-radius:3px;background:linear-gradient(#f6f7f9,#e9eaee 50%,#dfe1e5)"></div>
<div class="t" style="left:1096px;top:491px;width:200px;text-align:center;font-size:9px;color:#10102a"><u>L</u></div>
<div class="a" style="left:1178px;top:509px;width:36px;height:21px;border:1px solid #a7abb3;border-radius:3px;background:linear-gradient(#f6f7f9,#e9eaee 50%,#dfe1e5)"></div>
<div class="t" style="left:1096px;top:513px;width:200px;text-align:center;font-size:9px;color:#10102a"><u>M</u></div>
<div class="a" style="left:1178px;top:531px;width:36px;height:21px;border:1px solid #a7abb3;border-radius:3px;background:linear-gradient(#f6f7f9,#e9eaee 50%,#dfe1e5)"></div>
<div class="t" style="left:1096px;top:535px;width:200px;text-align:center;font-size:9px;color:#10102a"><u>N</u></div>
<div class="a" style="left:1178px;top:553px;width:36px;height:21px;border:1px solid #a7abb3;border-radius:3px;background:linear-gradient(#f6f7f9,#e9eaee 50%,#dfe1e5)"></div>
<div class="t" style="left:1096px;top:557px;width:200px;text-align:center;font-size:9px;color:#10102a"><u>O</u></div>
<div class="a" style="left:1178px;top:575px;width:36px;height:21px;border:1px solid #a7abb3;border-radius:3px;background:linear-gradient(#f6f7f9,#e9eaee 50%,#dfe1e5)"></div>
<div class="t" style="left:1096px;top:579px;width:200px;text-align:center;font-size:9px;color:#10102a"><u>P</u></div>
<div class="a" style="left:1178px;top:597px;width:36px;height:21px;border:1px solid #a7abb3;border-radius:3px;background:linear-gradient(#f6f7f9,#e9eaee 50%,#dfe1e5)"></div>
<div class="t" style="left:1096px;top:601px;width:200px;text-align:center;font-size:9px;color:#10102a"><u>Q</u></div>
<div class="a" style="left:1178px;top:619px;width:36px;height:21px;border:1px solid #a7abb3;border-radius:3px;background:linear-gradient(#f6f7f9,#e9eaee 50%,#dfe1e5)"></div>
<div class="t" style="left:1096px;top:623px;width:200px;text-align:center;font-size:9px;color:#10102a"><u>R</u></div>
<div class="a" style="left:1178px;top:641px;width:36px;height:21px;border:1px solid #a7abb3;border-radius:3px;background:linear-gradient(#f6f7f9,#e9eaee 50%,#dfe1e5)"></div>
<div class="t" style="left:1096px;top:645px;width:200px;text-align:center;font-size:9px;color:#10102a"><u>S</u></div>
<div class="a" style="left:12px;top:268px;width:1164px;height:394px;border:1px solid #9fa2aa;background:#fff"></div>
<div class="a" style="left:13px;top:269px;width:1162px;height:19px;background:linear-gradient(#f6f6f8,#eeeff2)"></div>
<div class="a" style="left:13px;top:288px;width:1144px;height:1px;background:#c9cbd1"></div>
<div class="a" style="left:28px;top:269px;width:1px;height:20px;background:#cfd1d6"></div>
<div class="a" style="left:100px;top:269px;width:3px;height:20px;background:#c8cad0;border-left:1px solid #d8dade;border-right:1px solid #d8dade"></div>
<div class="a" style="left:230px;top:269px;width:1px;height:20px;background:#cfd1d6"></div>
<div class="a" style="left:305px;top:269px;width:1px;height:20px;background:#cfd1d6"></div>
<div class="a" style="left:374px;top:269px;width:1px;height:20px;background:#cfd1d6"></div>
<div class="a" style="left:518px;top:269px;width:1px;height:20px;background:#cfd1d6"></div>
<div class="a" style="left:684px;top:269px;width:1px;height:20px;background:#cfd1d6"></div>
<div class="a" style="left:893px;top:269px;width:1px;height:20px;background:#cfd1d6"></div>
<div class="a" style="left:1067px;top:269px;width:1px;height:20px;background:#cfd1d6"></div>
<div class="t" style="left:32px;top:271px;font-size:11px">Document</div>
<div class="t" style="left:106px;top:271px;font-size:11px">Date</div>
<div class="t" style="left:234px;top:271px;font-size:11px">Ref</div>
<div class="t" style="left:309px;top:271px;font-size:11px">Ref 2</div>
<div class="t" style="left:378px;top:271px;font-size:11px">Paid Amount</div>
<div class="t" style="left:522px;top:271px;font-size:11px">Currency Code</div>
<div class="t" style="left:688px;top:271px;font-size:11px">Bank Account Code</div>
<div class="t" style="left:897px;top:271px;font-size:11px">Banked Amount</div>
<div class="t" style="left:1071px;top:271px;font-size:11px">Posted</div>
<div class="dd" style="left:87px;top:277px;border-top-color:#1a1a2c"></div>
<div class="a" style="left:1157px;top:269px;width:18px;height:392px;background:#f2f3f5;border-left:1px solid #e2e4e8"></div>
<svg style="left:1162px;top:274px" width="9" height="5" viewBox="0 0 9 5"><path d="M0.5,4.5 L4.5,0.5 L8.5,4.5 Z" fill="#9a9ea8"/></svg>
<div class="a" style="left:1163px;top:286px;width:7px;height:380px;border:1px solid #a3a6ae;border-radius:3px;background:linear-gradient(90deg,#f4f4f6,#dcdee2)"></div>
<div class="a" style="left:13px;top:289px;width:15px;height:372px;background:#f3f4f6"></div>
<div class="a" style="left:28px;top:289px;width:1px;height:372px;background:#cfd1d6"></div>
<svg style="left:36px;top:314px" width="8" height="5" viewBox="0 0 8 5"><path d="M0.5,0.5 L7.5,0.5 L4,4.5 Z" fill="#6f7282"/></svg>
<div class="t" style="left:52px;top:308px;font-size:11px;color:#6b6e7e;letter-spacing:-0.15px">Received From: A Mobile Ltd (2 Record(s))</div>
<div class="a" style="left:29px;top:322px;width:1128px;height:2px;background:#d3d5da"></div>
<div class="a" style="left:13px;top:323px;width:15px;height:1px;background:#d3d5da"></div>
<div class="a" style="left:29px;top:344px;width:1128px;height:1px;background:#dcdde2"></div>
<div class="a" style="left:13px;top:344px;width:15px;height:1px;background:#dcdde2"></div>
<div class="a" style="left:100px;top:324px;width:3px;height:20px;background:#d6d8dd;border-left:1px solid #e6e7ea;border-right:1px solid #e6e7ea"></div>
<div class="a" style="left:230px;top:324px;width:1px;height:20px;background:#dcdde2"></div>
<div class="a" style="left:305px;top:324px;width:1px;height:20px;background:#dcdde2"></div>
<div class="a" style="left:374px;top:324px;width:1px;height:20px;background:#dcdde2"></div>
<div class="a" style="left:518px;top:324px;width:1px;height:20px;background:#dcdde2"></div>
<div class="a" style="left:684px;top:324px;width:1px;height:20px;background:#dcdde2"></div>
<div class="a" style="left:893px;top:324px;width:1px;height:20px;background:#dcdde2"></div>
<div class="a" style="left:1067px;top:324px;width:1px;height:20px;background:#dcdde2"></div>
<div class="t" style="left:32px;top:327px;font-size:11px">RCV-000003</div>
<div class="t" style="left:106px;top:327px;font-size:11px">9/2/2010</div>
<div class="t" style="left:376px;top:327px;width:140px;text-align:right;font-size:11px;letter-spacing:-0.2px">200.00</div>
<div class="t" style="left:522px;top:327px;font-size:11px">USD</div>
<div class="t" style="left:688px;top:327px;font-size:11px">BNKAC-000002</div>
<div class="t" style="left:895px;top:327px;width:170px;text-align:right;font-size:11px;letter-spacing:-0.2px">200.00</div>
<svg style="left:1106px;top:326px" width="14" height="14" viewBox="0 0 14 14"><rect x="0.5" y="1.5" width="12" height="12" fill="#e4e5e9" stroke="#8b8e97"/><rect x="2.5" y="3.5" width="8" height="8" fill="#eef0f3" stroke="#d0d2d8" stroke-width="0.8"/><path d="M1.5,7 L5,12.5 L12.5,0.5" fill="none" stroke="#20203a" stroke-width="2"/></svg>
<div class="a" style="left:29px;top:365px;width:1128px;height:1px;background:#dcdde2"></div>
<div class="a" style="left:13px;top:365px;width:15px;height:1px;background:#dcdde2"></div>
<div class="a" style="left:100px;top:345px;width:3px;height:20px;background:#d6d8dd;border-left:1px solid #e6e7ea;border-right:1px solid #e6e7ea"></div>
<div class="a" style="left:230px;top:345px;width:1px;height:20px;background:#dcdde2"></div>
<div class="a" style="left:305px;top:345px;width:1px;height:20px;background:#dcdde2"></div>
<div class="a" style="left:374px;top:345px;width:1px;height:20px;background:#dcdde2"></div>
<div class="a" style="left:518px;top:345px;width:1px;height:20px;background:#dcdde2"></div>
<div class="a" style="left:684px;top:345px;width:1px;height:20px;background:#dcdde2"></div>
<div class="a" style="left:893px;top:345px;width:1px;height:20px;background:#dcdde2"></div>
<div class="a" style="left:1067px;top:345px;width:1px;height:20px;background:#dcdde2"></div>
<div class="t" style="left:32px;top:348px;font-size:11px">RCV-000001</div>
<div class="t" style="left:106px;top:348px;font-size:11px">9/2/2010</div>
<div class="t" style="left:376px;top:348px;width:140px;text-align:right;font-size:11px;letter-spacing:-0.2px">100.00</div>
<div class="t" style="left:522px;top:348px;font-size:11px">USD</div>
<div class="t" style="left:688px;top:348px;font-size:11px">BNKAC-000002</div>
<div class="t" style="left:895px;top:348px;width:170px;text-align:right;font-size:11px;letter-spacing:-0.2px">100.00</div>
<svg style="left:1106px;top:347px" width="14" height="14" viewBox="0 0 14 14"><rect x="0.5" y="1.5" width="12" height="12" fill="#e4e5e9" stroke="#8b8e97"/><rect x="2.5" y="3.5" width="8" height="8" fill="#eef0f3" stroke="#d0d2d8" stroke-width="0.8"/><path d="M1.5,7 L5,12.5 L12.5,0.5" fill="none" stroke="#20203a" stroke-width="2"/></svg>
<svg style="left:36px;top:391px" width="8" height="5" viewBox="0 0 8 5"><path d="M0.5,0.5 L7.5,0.5 L4,4.5 Z" fill="#6f7282"/></svg>
<div class="t" style="left:52px;top:385px;font-size:11px;color:#6b6e7e;letter-spacing:-0.15px">Received From: A UK Customer Inc. (1 Record(s))</div>
<div class="a" style="left:29px;top:399px;width:1128px;height:2px;background:#d3d5da"></div>
<div class="a" style="left:13px;top:400px;width:15px;height:1px;background:#d3d5da"></div>
<div class="a" style="left:29px;top:421px;width:1128px;height:1px;background:#dcdde2"></div>
<div class="a" style="left:13px;top:421px;width:15px;height:1px;background:#dcdde2"></div>
<div class="a" style="left:100px;top:401px;width:3px;height:20px;background:#d6d8dd;border-left:1px solid #e6e7ea;border-right:1px solid #e6e7ea"></div>
<div class="a" style="left:230px;top:401px;width:1px;height:20px;background:#dcdde2"></div>
<div class="a" style="left:305px;top:401px;width:1px;height:20px;background:#dcdde2"></div>
<div class="a" style="left:374px;top:401px;width:1px;height:20px;background:#dcdde2"></div>
<div class="a" style="left:518px;top:401px;width:1px;height:20px;background:#dcdde2"></div>
<div class="a" style="left:684px;top:401px;width:1px;height:20px;background:#dcdde2"></div>
<div class="a" style="left:893px;top:401px;width:1px;height:20px;background:#dcdde2"></div>
<div class="a" style="left:1067px;top:401px;width:1px;height:20px;background:#dcdde2"></div>
<div class="t" style="left:32px;top:404px;font-size:11px">RCV-000002</div>
<div class="t" style="left:106px;top:404px;font-size:11px">9/2/2010</div>
<div class="t" style="left:376px;top:404px;width:140px;text-align:right;font-size:11px;letter-spacing:-0.2px">100.00</div>
<div class="t" style="left:522px;top:404px;font-size:11px">GBP</div>
<div class="t" style="left:688px;top:404px;font-size:11px">BNKAC-000002</div>
<div class="t" style="left:895px;top:404px;width:170px;text-align:right;font-size:11px;letter-spacing:-0.2px">196.17</div>
<svg style="left:1106px;top:403px" width="14" height="14" viewBox="0 0 14 14"><rect x="0.5" y="1.5" width="12" height="12" fill="#e4e5e9" stroke="#8b8e97"/><rect x="2.5" y="3.5" width="8" height="8" fill="#eef0f3" stroke="#d0d2d8" stroke-width="0.8"/><path d="M1.5,7 L5,12.5 L12.5,0.5" fill="none" stroke="#20203a" stroke-width="2"/></svg>
<svg style="left:36px;top:447px" width="8" height="5" viewBox="0 0 8 5"><path d="M0.5,0.5 L7.5,0.5 L4,4.5 Z" fill="#6f7282"/></svg>
<div class="t" style="left:52px;top:441px;font-size:11px;color:#6b6e7e;letter-spacing:-0.15px">Received From: Byte ME! (3 Record(s))</div>
<div class="a" style="left:29px;top:455px;width:1128px;height:2px;background:#d3d5da"></div>
<div class="a" style="left:13px;top:456px;width:15px;height:1px;background:#d3d5da"></div>
<div class="a" style="left:29px;top:457px;width:72px;height:20px;background:#dfe7f8"></div>
<div class="a" style="left:230px;top:457px;width:927px;height:20px;background:#dfe7f8"></div>
<svg style="left:19px;top:463px" width="4" height="8" viewBox="0 0 4 8"><path d="M0,0 L4,4 L0,8 Z" fill="#1a1a2a"/></svg>
<div class="a" style="left:29px;top:477px;width:1128px;height:1px;background:#dcdde2"></div>
<div class="a" style="left:13px;top:477px;width:15px;height:1px;background:#dcdde2"></div>
<div class="a" style="left:100px;top:457px;width:3px;height:20px;background:#d6d8dd;border-left:1px solid #e6e7ea;border-right:1px solid #e6e7ea"></div>
<div class="a" style="left:230px;top:457px;width:1px;height:20px;background:#dcdde2"></div>
<div class="a" style="left:305px;top:457px;width:1px;height:20px;background:#dcdde2"></div>
<div class="a" style="left:374px;top:457px;width:1px;height:20px;background:#dcdde2"></div>
<div class="a" style="left:518px;top:457px;width:1px;height:20px;background:#dcdde2"></div>
<div class="a" style="left:684px;top:457px;width:1px;height:20px;background:#dcdde2"></div>
<div class="a" style="left:893px;top:457px;width:1px;height:20px;background:#dcdde2"></div>
<div class="a" style="left:1067px;top:457px;width:1px;height:20px;background:#dcdde2"></div>
<div class="t" style="left:32px;top:460px;font-size:11px">RCV-000033</div>
<div class="t" style="left:106px;top:460px;font-size:11px">2/23/2013</div>
<div class="t" style="left:376px;top:460px;width:140px;text-align:right;font-size:11px;letter-spacing:-0.2px">199.00</div>
<div class="t" style="left:522px;top:460px;font-size:11px">USD</div>
<div class="t" style="left:688px;top:460px;font-size:11px">BNKAC-000002</div>
<div class="t" style="left:895px;top:460px;width:170px;text-align:right;font-size:11px;letter-spacing:-0.2px">199.00</div>
<svg style="left:1106px;top:459px" width="14" height="14" viewBox="0 0 14 14"><rect x="0.5" y="1.5" width="12" height="12" fill="#e4e5e9" stroke="#8b8e97"/><rect x="2.5" y="3.5" width="8" height="8" fill="#eef0f3" stroke="#d0d2d8" stroke-width="0.8"/><path d="M1.5,7 L5,12.5 L12.5,0.5" fill="none" stroke="#20203a" stroke-width="2"/></svg>
<div class="a" style="left:29px;top:457px;width:1128px;height:20px;border:1px dotted #303040"></div>
<div class="a" style="left:29px;top:498px;width:1128px;height:1px;background:#dcdde2"></div>
<div class="a" style="left:13px;top:498px;width:15px;height:1px;background:#dcdde2"></div>
<div class="a" style="left:100px;top:478px;width:3px;height:20px;background:#d6d8dd;border-left:1px solid #e6e7ea;border-right:1px solid #e6e7ea"></div>
<div class="a" style="left:230px;top:478px;width:1px;height:20px;background:#dcdde2"></div>
<div class="a" style="left:305px;top:478px;width:1px;height:20px;background:#dcdde2"></div>
<div class="a" style="left:374px;top:478px;width:1px;height:20px;background:#dcdde2"></div>
<div class="a" style="left:518px;top:478px;width:1px;height:20px;background:#dcdde2"></div>
<div class="a" style="left:684px;top:478px;width:1px;height:20px;background:#dcdde2"></div>
<div class="a" style="left:893px;top:478px;width:1px;height:20px;background:#dcdde2"></div>
<div class="a" style="left:1067px;top:478px;width:1px;height:20px;background:#dcdde2"></div>
<div class="t" style="left:32px;top:481px;font-size:11px">RCV-000016</div>
<div class="t" style="left:106px;top:481px;font-size:11px">1/16/2013</div>
<div class="t" style="left:234px;top:481px;font-size:11px">20023</div>
<div class="t" style="left:376px;top:481px;width:140px;text-align:right;font-size:11px;letter-spacing:-0.2px">1,000.00</div>
<div class="t" style="left:522px;top:481px;font-size:11px">USD</div>
<div class="t" style="left:688px;top:481px;font-size:11px">BNKAC-000002</div>
<div class="t" style="left:895px;top:481px;width:170px;text-align:right;font-size:11px;letter-spacing:-0.2px">1,000.00</div>
<svg style="left:1106px;top:480px" width="14" height="14" viewBox="0 0 14 14"><rect x="0.5" y="1.5" width="12" height="12" fill="#e4e5e9" stroke="#8b8e97"/><rect x="2.5" y="3.5" width="8" height="8" fill="#eef0f3" stroke="#d0d2d8" stroke-width="0.8"/><path d="M1.5,7 L5,12.5 L12.5,0.5" fill="none" stroke="#20203a" stroke-width="2"/></svg>
<div class="a" style="left:29px;top:519px;width:1128px;height:1px;background:#dcdde2"></div>
<div class="a" style="left:13px;top:519px;width:15px;height:1px;background:#dcdde2"></div>
<div class="a" style="left:100px;top:499px;width:3px;height:20px;background:#d6d8dd;border-left:1px solid #e6e7ea;border-right:1px solid #e6e7ea"></div>
<div class="a" style="left:230px;top:499px;width:1px;height:20px;background:#dcdde2"></div>
<div class="a" style="left:305px;top:499px;width:1px;height:20px;background:#dcdde2"></div>
<div class="a" style="left:374px;top:499px;width:1px;height:20px;background:#dcdde2"></div>
<div class="a" style="left:518px;top:499px;width:1px;height:20px;background:#dcdde2"></div>
<div class="a" style="left:684px;top:499px;width:1px;height:20px;background:#dcdde2"></div>
<div class="a" style="left:893px;top:499px;width:1px;height:20px;background:#dcdde2"></div>
<div class="a" style="left:1067px;top:499px;width:1px;height:20px;background:#dcdde2"></div>
<div class="t" style="left:32px;top:502px;font-size:11px">RCV-000012</div>
<div class="t" style="left:106px;top:502px;font-size:11px">12/27/2012</div>
<div class="t" style="left:376px;top:502px;width:140px;text-align:right;font-size:11px;letter-spacing:-0.2px">585.00</div>
<div class="t" style="left:522px;top:502px;font-size:11px">USD</div>
<div class="t" style="left:688px;top:502px;font-size:11px">BNKAC-000002</div>
<div class="t" style="left:895px;top:502px;width:170px;text-align:right;font-size:11px;letter-spacing:-0.2px">585.00</div>
<svg style="left:1106px;top:501px" width="14" height="14" viewBox="0 0 14 14"><rect x="0.5" y="1.5" width="12" height="12" fill="#e4e5e9" stroke="#8b8e97"/><rect x="2.5" y="3.5" width="8" height="8" fill="#eef0f3" stroke="#d0d2d8" stroke-width="0.8"/><path d="M1.5,7 L5,12.5 L12.5,0.5" fill="none" stroke="#20203a" stroke-width="2"/></svg>
<svg style="left:36px;top:545px" width="8" height="5" viewBox="0 0 8 5"><path d="M0.5,0.5 L7.5,0.5 L4,4.5 Z" fill="#6f7282"/></svg>
<div class="t" style="left:52px;top:539px;font-size:11px;color:#6b6e7e;letter-spacing:-0.15px">Received From: Cellphone Express (11 Record(s))</div>
<div class="a" style="left:29px;top:553px;width:1128px;height:2px;background:#d3d5da"></div>
<div class="a" style="left:13px;top:554px;width:15px;height:1px;background:#d3d5da"></div>
<div class="a" style="left:29px;top:575px;width:1128px;height:1px;background:#dcdde2"></div>
<div class="a" style="left:13px;top:575px;width:15px;height:1px;background:#dcdde2"></div>
<div class="a" style="left:100px;top:555px;width:3px;height:20px;background:#d6d8dd;border-left:1px solid #e6e7ea;border-right:1px solid #e6e7ea"></div>
<div class="a" style="left:230px;top:555px;width:1px;height:20px;background:#dcdde2"></div>
<div class="a" style="left:305px;top:555px;width:1px;height:20px;background:#dcdde2"></div>
<div class="a" style="left:374px;top:555px;width:1px;height:20px;background:#dcdde2"></div>
<div class="a" style="left:518px;top:555px;width:1px;height:20px;background:#dcdde2"></div>
<div class="a" style="left:684px;top:555px;width:1px;height:20px;background:#dcdde2"></div>
<div class="a" style="left:893px;top:555px;width:1px;height:20px;background:#dcdde2"></div>
<div class="a" style="left:1067px;top:555px;width:1px;height:20px;background:#dcdde2"></div>
<div class="t" style="left:32px;top:558px;font-size:11px">RCV-000026</div>
<div class="t" style="left:106px;top:558px;font-size:11px">2/14/2013</div>
<div class="t" style="left:376px;top:558px;width:140px;text-align:right;font-size:11px;letter-spacing:-0.2px">50.00</div>
<div class="t" style="left:522px;top:558px;font-size:11px">USD</div>
<div class="t" style="left:688px;top:558px;font-size:11px">BNKAC-000002</div>
<div class="t" style="left:895px;top:558px;width:170px;text-align:right;font-size:11px;letter-spacing:-0.2px">50.00</div>
<svg style="left:1106px;top:557px" width="14" height="14" viewBox="0 0 14 14"><rect x="0.5" y="1.5" width="12" height="12" fill="#e4e5e9" stroke="#8b8e97"/><rect x="2.5" y="3.5" width="8" height="8" fill="#eef0f3" stroke="#d0d2d8" stroke-width="0.8"/><path d="M1.5,7 L5,12.5 L12.5,0.5" fill="none" stroke="#20203a" stroke-width="2"/></svg>
<div class="a" style="left:29px;top:596px;width:1128px;height:1px;background:#dcdde2"></div>
<div class="a" style="left:13px;top:596px;width:15px;height:1px;background:#dcdde2"></div>
<div class="a" style="left:100px;top:576px;width:3px;height:20px;background:#d6d8dd;border-left:1px solid #e6e7ea;border-right:1px solid #e6e7ea"></div>
<div class="a" style="left:230px;top:576px;width:1px;height:20px;background:#dcdde2"></div>
<div class="a" style="left:305px;top:576px;width:1px;height:20px;background:#dcdde2"></div>
<div class="a" style="left:374px;top:576px;width:1px;height:20px;background:#dcdde2"></div>
<div class="a" style="left:518px;top:576px;width:1px;height:20px;background:#dcdde2"></div>
<div class="a" style="left:684px;top:576px;width:1px;height:20px;background:#dcdde2"></div>
<div class="a" style="left:893px;top:576px;width:1px;height:20px;background:#dcdde2"></div>
<div class="a" style="left:1067px;top:576px;width:1px;height:20px;background:#dcdde2"></div>
<div class="t" style="left:32px;top:579px;font-size:11px">RCV-000017</div>
<div class="t" style="left:106px;top:579px;font-size:11px">1/26/2013</div>
<div class="t" style="left:234px;top:579px;font-size:11px">1002</div>
<div class="t" style="left:376px;top:579px;width:140px;text-align:right;font-size:11px;letter-spacing:-0.2px">1,180.00</div>
<div class="t" style="left:522px;top:579px;font-size:11px">USD</div>
<div class="t" style="left:688px;top:579px;font-size:11px">BNKAC-000002</div>
<div class="t" style="left:895px;top:579px;width:170px;text-align:right;font-size:11px;letter-spacing:-0.2px">1,180.00</div>
<svg style="left:1106px;top:578px" width="14" height="14" viewBox="0 0 14 14"><rect x="0.5" y="1.5" width="12" height="12" fill="#e4e5e9" stroke="#8b8e97"/><rect x="2.5" y="3.5" width="8" height="8" fill="#eef0f3" stroke="#d0d2d8" stroke-width="0.8"/><path d="M1.5,7 L5,12.5 L12.5,0.5" fill="none" stroke="#20203a" stroke-width="2"/></svg>
<div class="a" style="left:29px;top:617px;width:1128px;height:1px;background:#dcdde2"></div>
<div class="a" style="left:13px;top:617px;width:15px;height:1px;background:#dcdde2"></div>
<div class="a" style="left:100px;top:597px;width:3px;height:20px;background:#d6d8dd;border-left:1px solid #e6e7ea;border-right:1px solid #e6e7ea"></div>
<div class="a" style="left:230px;top:597px;width:1px;height:20px;background:#dcdde2"></div>
<div class="a" style="left:305px;top:597px;width:1px;height:20px;background:#dcdde2"></div>
<div class="a" style="left:374px;top:597px;width:1px;height:20px;background:#dcdde2"></div>
<div class="a" style="left:518px;top:597px;width:1px;height:20px;background:#dcdde2"></div>
<div class="a" style="left:684px;top:597px;width:1px;height:20px;background:#dcdde2"></div>
<div class="a" style="left:893px;top:597px;width:1px;height:20px;background:#dcdde2"></div>
<div class="a" style="left:1067px;top:597px;width:1px;height:20px;background:#dcdde2"></div>
<div class="t" style="left:32px;top:600px;font-size:11px">RCV-000015</div>
<div class="t" style="left:106px;top:600px;font-size:11px">1/16/2013</div>
<div class="t" style="left:234px;top:600px;font-size:11px">2022</div>
<div class="t" style="left:376px;top:600px;width:140px;text-align:right;font-size:11px;letter-spacing:-0.2px">450.00</div>
<div class="t" style="left:522px;top:600px;font-size:11px">USD</div>
<div class="t" style="left:688px;top:600px;font-size:11px">BNKAC-000002</div>
<div class="t" style="left:895px;top:600px;width:170px;text-align:right;font-size:11px;letter-spacing:-0.2px">450.00</div>
<svg style="left:1106px;top:599px" width="14" height="14" viewBox="0 0 14 14"><rect x="0.5" y="1.5" width="12" height="12" fill="#e4e5e9" stroke="#8b8e97"/><rect x="2.5" y="3.5" width="8" height="8" fill="#eef0f3" stroke="#d0d2d8" stroke-width="0.8"/><path d="M1.5,7 L5,12.5 L12.5,0.5" fill="none" stroke="#20203a" stroke-width="2"/></svg>
<div class="a" style="left:29px;top:638px;width:1128px;height:1px;background:#dcdde2"></div>
<div class="a" style="left:13px;top:638px;width:15px;height:1px;background:#dcdde2"></div>
<div class="a" style="left:100px;top:618px;width:3px;height:20px;background:#d6d8dd;border-left:1px solid #e6e7ea;border-right:1px solid #e6e7ea"></div>
<div class="a" style="left:230px;top:618px;width:1px;height:20px;background:#dcdde2"></div>
<div class="a" style="left:305px;top:618px;width:1px;height:20px;background:#dcdde2"></div>
<div class="a" style="left:374px;top:618px;width:1px;height:20px;background:#dcdde2"></div>
<div class="a" style="left:518px;top:618px;width:1px;height:20px;background:#dcdde2"></div>
<div class="a" style="left:684px;top:618px;width:1px;height:20px;background:#dcdde2"></div>
<div class="a" style="left:893px;top:618px;width:1px;height:20px;background:#dcdde2"></div>
<div class="a" style="left:1067px;top:618px;width:1px;height:20px;background:#dcdde2"></div>
<div class="t" style="left:32px;top:621px;font-size:11px">RCV-000014</div>
<div class="t" style="left:106px;top:621px;font-size:11px">1/16/2013</div>
<div class="t" style="left:376px;top:621px;width:140px;text-align:right;font-size:11px;letter-spacing:-0.2px">208.00</div>
<div class="t" style="left:522px;top:621px;font-size:11px">USD</div>
<div class="t" style="left:688px;top:621px;font-size:11px">BNKAC-000002</div>
<div class="t" style="left:895px;top:621px;width:170px;text-align:right;font-size:11px;letter-spacing:-0.2px">208.00</div>
<svg style="left:1106px;top:620px" width="14" height="14" viewBox="0 0 14 14"><rect x="0.5" y="1.5" width="12" height="12" fill="#e4e5e9" stroke="#8b8e97"/><rect x="2.5" y="3.5" width="8" height="8" fill="#eef0f3" stroke="#d0d2d8" stroke-width="0.8"/><path d="M1.5,7 L5,12.5 L12.5,0.5" fill="none" stroke="#20203a" stroke-width="2"/></svg>
<div class="a" style="left:29px;top:659px;width:1128px;height:1px;background:#dcdde2"></div>
<div class="a" style="left:13px;top:659px;width:15px;height:1px;background:#dcdde2"></div>
<div class="a" style="left:100px;top:639px;width:3px;height:20px;background:#d6d8dd;border-left:1px solid #e6e7ea;border-right:1px solid #e6e7ea"></div>
<div class="a" style="left:230px;top:639px;width:1px;height:20px;background:#dcdde2"></div>
<div class="a" style="left:305px;top:639px;width:1px;height:20px;background:#dcdde2"></div>
<div class="a" style="left:374px;top:639px;width:1px;height:20px;background:#dcdde2"></div>
<div class="a" style="left:518px;top:639px;width:1px;height:20px;background:#dcdde2"></div>
<div class="a" style="left:684px;top:639px;width:1px;height:20px;background:#dcdde2"></div>
<div class="a" style="left:893px;top:639px;width:1px;height:20px;background:#dcdde2"></div>
<div class="a" style="left:1067px;top:639px;width:1px;height:20px;background:#dcdde2"></div>
<div class="t" style="left:32px;top:642px;font-size:11px">RCV-000013</div>
<div class="t" style="left:106px;top:642px;font-size:11px">1/2/2013</div>
<div class="t" style="left:234px;top:642px;font-size:11px">102</div>
<div class="t" style="left:376px;top:642px;width:140px;text-align:right;font-size:11px;letter-spacing:-0.2px">125.00</div>
<div class="t" style="left:522px;top:642px;font-size:11px">USD</div>
<div class="t" style="left:688px;top:642px;font-size:11px">BNKAC-000002</div>
<div class="t" style="left:895px;top:642px;width:170px;text-align:right;font-size:11px;letter-spacing:-0.2px">125.00</div>
<svg style="left:1106px;top:641px" width="14" height="14" viewBox="0 0 14 14"><rect x="0.5" y="1.5" width="12" height="12" fill="#e4e5e9" stroke="#8b8e97"/><rect x="2.5" y="3.5" width="8" height="8" fill="#eef0f3" stroke="#d0d2d8" stroke-width="0.8"/><path d="M1.5,7 L5,12.5 L12.5,0.5" fill="none" stroke="#20203a" stroke-width="2"/></svg>
<div class="a" style="left:3px;top:144px;width:1px;height:516px;background:#9a9da6"></div>
<div class="a" style="left:4px;top:144px;width:1px;height:516px;background:#d8dadf"></div>
<div class="a" style="left:1226px;top:144px;width:1px;height:516px;background:#a9acb4"></div>
<div class="a" style="left:1227px;top:144px;width:1px;height:516px;background:#eceef1"></div>
<div class="a" style="left:373px;top:122px;width:155px;height:92px;background:rgba(0,0,0,0.28);filter:blur(1.2px)"></div>
<div class="a" style="left:370px;top:119px;width:155px;height:92px;background:#fff;border:1px solid #a8abb2"></div>
<div class="t" style="left:406px;top:125px;transform:scaleX(0.963);transform-origin:0 0;font-size:12px">New Receipt</div>
<div class="t" style="left:406px;top:147px;transform:scaleX(0.963);transform-origin:0 0;font-size:12px">Find Receipt</div>
<div class="a" style="left:372px;top:163px;width:153px;height:24px;border:3px solid #f00;background:linear-gradient(#e4ebfa,#d3def6)"></div>
<div class="t" style="left:406px;top:169px;transform:scaleX(0.963);transform-origin:0 0;font-size:12px">Void Receipt</div>
<div class="t" style="left:406px;top:191px;transform:scaleX(0.963);transform-origin:0 0;font-size:12px">Customer Refund</div>
<svg style="left:377px;top:123px" width="17" height="17" viewBox="0 0 17 17"><rect x="3.5" y="1.5" width="11.5" height="14.5" fill="url(#gPaperB)" stroke="#333" stroke-width="1.2"/><path d="M6,5h7M6,7.5h7M6,10h7M6,12.5h6" stroke="#3a8ed8" stroke-width="0.9"/><circle cx="3.5" cy="5.5" r="3.2" fill="url(#gSun)" stroke="#f0c000" stroke-width="0.6"/></svg>
<svg style="left:376px;top:145px" width="17" height="17" viewBox="0 0 17 17"><circle cx="6.5" cy="6.5" r="5" fill="#d8ecf8" stroke="#8c9aa8" stroke-width="1.8"/><path d="M10,10 L15.5,15.5" stroke="#444" stroke-width="2.5"/></svg>
<svg style="left:377px;top:167px" width="17" height="17" viewBox="0 0 17 17"><rect x="1" y="1" width="10.5" height="13.5" fill="url(#gGreen)" stroke="#444" stroke-width="1.2"/><text x="3" y="7" font-family="Liberation Sans" font-size="5" fill="#6aa040">R</text><path d="M3,9.5h6M3,11.5h6" stroke="#6aa040"/><circle cx="12" cy="11.5" r="4" fill="none" stroke="#d85050" stroke-width="1.6" opacity="0.85"/><path d="M9.5,14 L14.5,9" stroke="#d85050" stroke-width="1.3" opacity="0.85"/></svg>
<svg style="left:376px;top:188px" width="18" height="18" viewBox="0 0 18 18"><path d="M7.5,5.5 L10,1.8 L12,4 L13.5,1.8 L16,5.5 Z" fill="#80e060" stroke="#3a7a2a" stroke-width="0.5"/><rect x="3.3" y="4.6" width="13.2" height="11" rx="0.8" fill="#b07018" stroke="#3a2a18" stroke-width="0.9"/><rect x="3.8" y="5.2" width="12.2" height="1.6" fill="#e0b070"/><path d="M1.8,11 L9,11 Q11.5,11 11.5,13.5 L11.5,17" fill="none" stroke="#f04a10" stroke-width="2.6"/><path d="M1,8 L1,14 L4.5,11 Z" fill="#f04a10" stroke="#555" stroke-width="0.4"/><rect x="13.3" y="10" width="1.5" height="3.8" fill="#e8e8f0" stroke="#556" stroke-width="0.4"/></svg>
</body></html>
